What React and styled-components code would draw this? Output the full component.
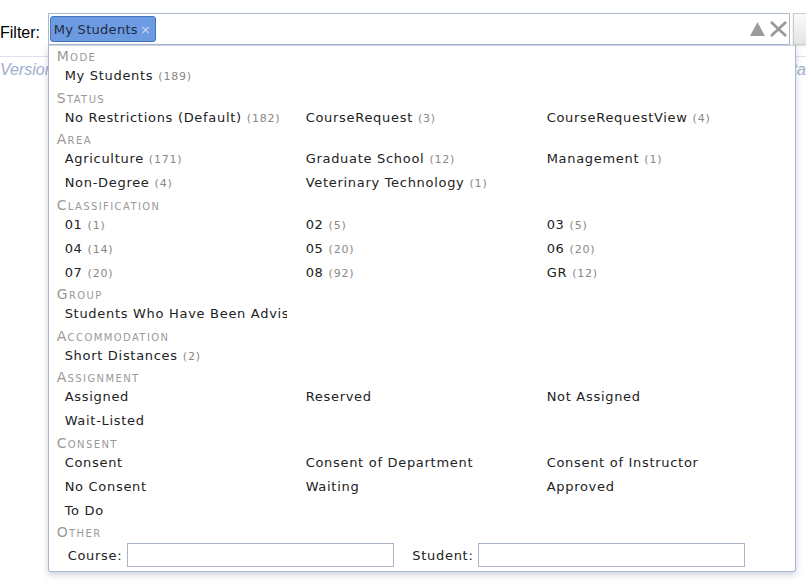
import React from 'react';
import styled, { createGlobalStyle } from 'styled-components';

const GlobalStyle = createGlobalStyle`
  html, body {
    margin: 0;
    padding: 0;
    background: #fff;
  }
  body {
    font-family: "DejaVu Sans", Verdana, sans-serif;
    overflow: hidden;
  }
`;

const Page = styled.div`
  position: relative;
  width: 806px;
  height: 585px;
  overflow: hidden;
`;

const Toolbar = styled.div`
  display: flex;
  align-items: center;
  padding-top: 13px;
`;

const FilterLabel = styled.label`
  width: 48px;
  font-family: "Liberation Sans", Arial, sans-serif;
  font-size: 16px;
  color: #000;
  padding-top: 7px;
`;

const FilterBox = styled.div`
  position: relative;
  width: 744px;
  height: 30px;
  border: 1px solid #a9b8d0;
  background: #fff;
  display: flex;
  align-items: center;
  padding: 0 1px 0 1px;
  box-sizing: content-box;
`;

const Chip = styled.span`
  display: inline-flex;
  align-items: center;
  height: 24px;
  padding: 0 4px 0 3px;
  background: #6d9be2;
  border: 1px solid #4672b9;
  border-radius: 3px;
  color: #1f2b45;
  font-size: 13px;
  letter-spacing: 0.3px;
`;

const ChipClose = styled.span`
  color: #c8d6ef;
  font-size: 13px;
  margin-left: 2px;
`;

const Controls = styled.div`
  margin-left: auto;
  display: flex;
  align-items: center;
  gap: 4px;
`;

const SideButton = styled.div`
  width: 12px;
  height: 30px;
  margin-left: 3px;
  border: 1px solid #ccc;
  border-right: none;
  background: linear-gradient(#fafafa, #e4e4e4);
  box-shadow: 0 1px 2px rgba(0, 0, 0, 0.15);
`;

const Rule = styled.div`
  margin-top: 11px;
  border-top: 1px solid #dbe3ef;
`;

const InfoLine = styled.div`
  display: flex;
  justify-content: space-between;
  padding-top: 4px;
  font-family: "Liberation Sans", Arial, sans-serif;
  font-style: italic;
  font-size: 16px;
  color: #9eaecb;
`;

const Dropdown = styled.div`
  position: absolute;
  top: 31px;
  left: -1px;
  width: 730px;
  padding: 3px 8px 1px 8px;
  background: #fff;
  border: 1px solid #a9b8d0;
  border-top-color: #c9d3e3;
  border-radius: 0 0 3px 3px;
  box-shadow: 0 3px 6px rgba(60, 80, 120, 0.25);
  z-index: 2;
  letter-spacing: 0.7px;
`;

const SectionTitle = styled.div`
  height: 15px;
  line-height: 15px;
  margin-top: ${p => (p.$first ? '0' : '2.5px')};
  font-size: 14px;
  font-variant: small-caps;
  letter-spacing: 1.4px;
  color: #999;
`;

const Grid = styled.div`
  display: grid;
  grid-template-columns: repeat(3, 241px);
`;

const Cell = styled.div`
  height: 24px;
  line-height: 24px;
  padding-left: 8px;
  margin-right: 11px;
  white-space: nowrap;
  overflow: hidden;
  font-size: 13px;
  color: #222;
`;

const Count = styled.span`
  font-size: 11px;
  color: #888;
  margin-left: 5px;
  letter-spacing: 0.8px;
`;

const OtherRow = styled.div`
  display: flex;
  align-items: center;
  gap: 18px;
  height: 30px;
  padding-left: 11px;
`;

const Field = styled.label`
  display: flex;
  align-items: center;
  gap: 5px;
  font-size: 13px;
  color: #222;
`;

const TextInput = styled.input`
  width: 267px;
  height: 24px;
  border: 1px solid #a9b5c6;
  padding: 0 2px;
  box-sizing: border-box;
`;

const sections = [
  { title: 'Mode', items: [['My Students', 189]] },
  {
    title: 'Status',
    items: [['No Restrictions (Default)', 182], ['CourseRequest', 3], ['CourseRequestView', 4]],
  },
  {
    title: 'Area',
    items: [
      ['Agriculture', 171], ['Graduate School', 12], ['Management', 1],
      ['Non-Degree', 4], ['Veterinary Technology', 1],
    ],
  },
  {
    title: 'Classification',
    items: [
      ['01', 1], ['02', 5], ['03', 5],
      ['04', 14], ['05', 20], ['06', 20],
      ['07', 20], ['08', 92], ['GR', 12],
    ],
  },
  { title: 'Group', items: [['Students Who Have Been Advised']] },
  { title: 'Accommodation', items: [['Short Distances', 2]] },
  {
    title: 'Assignment',
    items: [['Assigned'], ['Reserved'], ['Not Assigned'], ['Wait-Listed']],
  },
  {
    title: 'Consent',
    items: [
      ['Consent'], ['Consent of Department'], ['Consent of Instructor'],
      ['No Consent'], ['Waiting'], ['Approved'],
      ['To Do'],
    ],
  },
];

const UpIcon = () => (
  <svg width="15" height="14" viewBox="0 0 15 14">
    <polygon points="7.5,0 15,14 0,14" fill="#9c9c9c" />
  </svg>
);

const CloseIcon = () => (
  <svg width="19" height="16" viewBox="0 0 19 16">
    <path d="M2 1 L17 15 M17 1 L2 15" stroke="#9a9a9a" strokeWidth="2.8" fill="none" />
  </svg>
);

const App = () => (
  <Page>
    <GlobalStyle />
    <Toolbar>
      <FilterLabel>Filter:</FilterLabel>
      <FilterBox>
        <Chip>
          My Students<ChipClose>×</ChipClose>
        </Chip>
        <Controls>
          <UpIcon />
          <CloseIcon />
        </Controls>
        <Dropdown>
          {sections.map((s, i) => (
            <div key={s.title}>
              <SectionTitle $first={i === 0}>{s.title}</SectionTitle>
              <Grid>
                {s.items.map(([name, count]) => (
                  <Cell key={name}>
                    {name}
                    {count !== undefined && <Count>({count})</Count>}
                  </Cell>
                ))}
              </Grid>
            </div>
          ))}
          <SectionTitle>Other</SectionTitle>
          <OtherRow>
            <Field>
              Course: <TextInput type="text" />
            </Field>
            <Field>
              Student: <TextInput type="text" />
            </Field>
          </OtherRow>
        </Dropdown>
      </FilterBox>
      <SideButton />
    </Toolbar>
    <Rule />
    <InfoLine>
      <span>Version</span>
      <span>Data</span>
    </InfoLine>
  </Page>
);

export default App;
